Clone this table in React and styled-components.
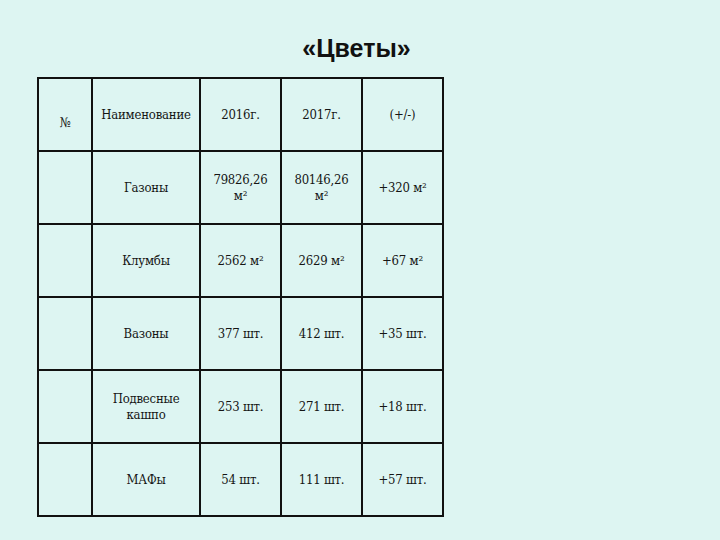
import React from "react";
import styled, { createGlobalStyle } from "styled-components";

const GlobalStyle = createGlobalStyle`
  html, body {
    margin: 0;
    padding: 0;
    background: #ddf5f2;
  }
`;

const Page = styled.div`
  width: 720px;
  height: 540px;
  background: #ddf5f2;
  padding-top: 34px;
  box-sizing: border-box;
`;

const Title = styled.h1`
  margin: 0 0 15px 0;
  padding-right: 7px;
  text-align: center;
  font-family: "Liberation Sans", Arial, sans-serif;
  font-weight: bold;
  font-size: 25px;
  line-height: 28px;
  color: #111;
`;

const Table = styled.table`
  margin-left: 37px;
  border-collapse: collapse;
  table-layout: fixed;
  width: 405px;
  font-family: "DejaVu Serif Condensed", "DejaVu Serif", serif;
  font-size: 13px;
  letter-spacing: -0.2px;
  color: #151515;
`;

const Cell = styled.td`
  border: 2px solid #111;
  height: ${(p) => (p.$low ? 55 : 71)}px;
  padding: ${(p) => (p.$low ? "16px 0 0" : "0")};
  text-align: center;
  vertical-align: middle;
  line-height: 16px;
`;

const widths = [54, 108, 81, 81, 81];

const rows = [
  ["№", "Наименование", "2016г.", "2017г.", "(+/-)"],
  ["", "Газоны", ["79826,26", "м²"], ["80146,26", "м²"], "+320 м²"],
  ["", "Клумбы", "2562 м²", "2629 м²", "+67 м²"],
  ["", "Вазоны", "377 шт.", "412 шт.", "+35 шт."],
  ["", ["Подвесные", "кашпо"], "253 шт.", "271 шт.", "+18 шт."],
  ["", "МАФы", "54 шт.", "111 шт.", "+57 шт."],
];

const renderText = (t) =>
  Array.isArray(t)
    ? t.map((line, i) => (
        <React.Fragment key={i}>
          {i > 0 && <br />}
          {line}
        </React.Fragment>
      ))
    : t;

export default function App() {
  return (
    <Page>
      <GlobalStyle />
      <Title>«Цветы»</Title>
      <Table>
        <colgroup>
          {widths.map((w, i) => (
            <col key={i} style={{ width: w }} />
          ))}
        </colgroup>
        <tbody>
          {rows.map((row, r) => (
            <tr key={r}>
              {row.map((c, i) => (
                <Cell key={i} $low={r === 0 && i === 0}>
                  {renderText(c)}
                </Cell>
              ))}
            </tr>
          ))}
        </tbody>
      </Table>
    </Page>
  );
}
